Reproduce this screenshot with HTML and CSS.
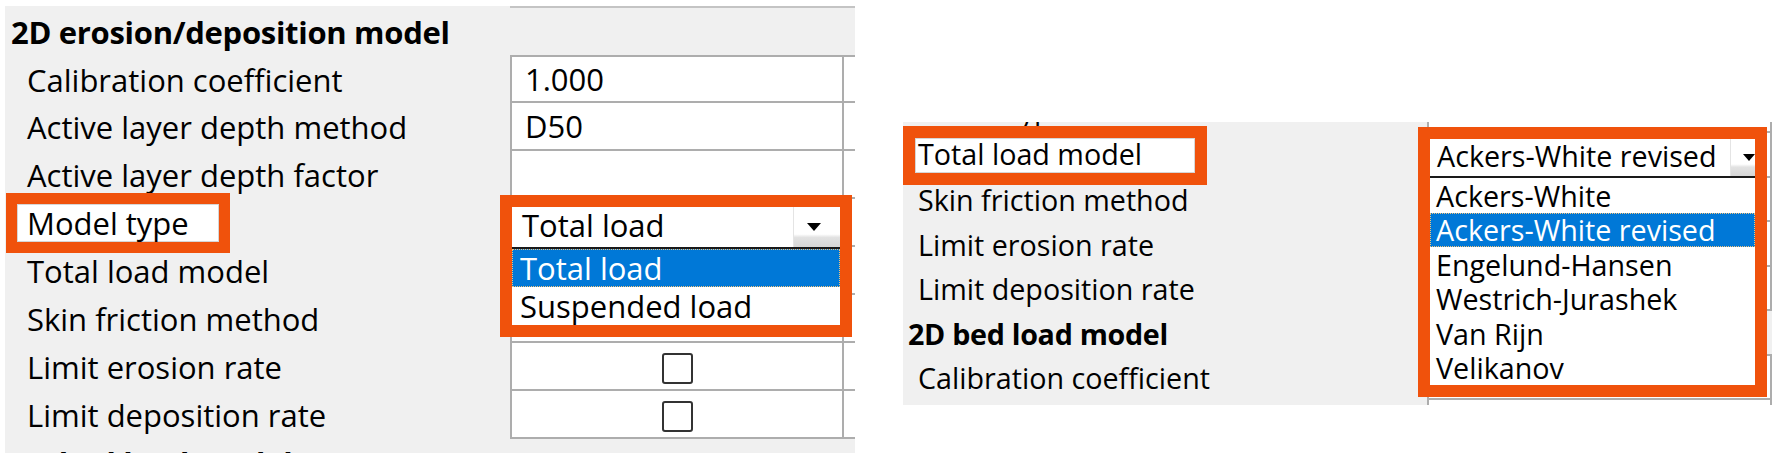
FILE: index.html
```html
<!DOCTYPE html>
<html lang="en">

<head>
  <meta charset="UTF-8">
  <title>property grid</title>
  <link rel="stylesheet" href="styles.css">
</head>

<body>
  <div class="shot">

    <!-- 左边: Model type 下拉 -->
    <div class="grid grid-a">
      <div class="row cat first">
        <div class="name">2D erosion/deposition model</div>
        <div class="val"></div>
        <div class="end"></div>
      </div>
      <div class="row short">
        <div class="name">Calibration coefficient</div>
        <div class="val">1.000</div>
        <div class="end"></div>
      </div>
      <div class="row">
        <div class="name">Active layer depth method</div>
        <div class="val">D50</div>
        <div class="end"></div>
      </div>
      <div class="row">
        <div class="name">Active layer depth factor</div>
        <div class="val"></div>
        <div class="end"></div>
      </div>
      <div class="row">
        <div class="name"><span class="pick">Model type</span></div>
        <div class="val edit">
          <div class="drop">
            <div class="field">
              <span class="text">Total load</span>
              <span class="btn"><svg class="arrow" viewBox="0 0 14 8"><path d="M0 0h14L7 8z"/></svg></span>
            </div>
            <ul class="list">
              <li class="item on">Total load</li>
              <li class="item">Suspended load</li>
            </ul>
          </div>
        </div>
        <div class="end"></div>
      </div>
      <div class="row">
        <div class="name">Total load model</div>
        <div class="val"></div>
        <div class="end"></div>
      </div>
      <div class="row">
        <div class="name">Skin friction method</div>
        <div class="val"></div>
        <div class="end"></div>
      </div>
      <div class="row">
        <div class="name">Limit erosion rate</div>
        <div class="val box"><span class="check"></span></div>
        <div class="end"></div>
      </div>
      <div class="row">
        <div class="name">Limit deposition rate</div>
        <div class="val box"><span class="check"></span></div>
        <div class="end"></div>
      </div>
      <div class="row cat">
        <div class="name">2D bed load model</div>
        <div class="val"></div>
        <div class="end"></div>
      </div>
    </div>

    <!-- 右边: Total load model 下拉 -->
    <div class="grid grid-b">
      <div class="row clip">
        <div class="name">Model type</div>
        <div class="val"></div>
      </div>
      <div class="row">
        <div class="name"><span class="pick">Total load model</span></div>
        <div class="val edit">
          <div class="drop">
            <div class="field">
              <span class="text">Ackers-White revised</span>
              <span class="btn"><svg class="arrow" viewBox="0 0 14 8"><path d="M0 0h14L7 8z"/></svg></span>
            </div>
            <ul class="list">
              <li class="item">Ackers-White</li>
              <li class="item on">Ackers-White revised</li>
              <li class="item">Engelund-Hansen</li>
              <li class="item">Westrich-Jurashek</li>
              <li class="item">Van Rijn</li>
              <li class="item">Velikanov</li>
            </ul>
          </div>
        </div>
      </div>
      <div class="row">
        <div class="name">Skin friction method</div>
        <div class="val"></div>
      </div>
      <div class="row">
        <div class="name">Limit erosion rate</div>
        <div class="val box"><span class="check"></span></div>
      </div>
      <div class="row">
        <div class="name">Limit deposition rate</div>
        <div class="val box"><span class="check"></span></div>
      </div>
      <div class="row cat">
        <div class="name">2D bed load model</div>
        <div class="val"></div>
      </div>
      <div class="row">
        <div class="name">Calibration coefficient</div>
        <div class="val"></div>
      </div>
      <div class="row">
        <div class="name"></div>
        <div class="val"></div>
      </div>
    </div>

  </div>
</body>

</html>
```

FILE: styles.css
```css
body {
  margin: 0;
  background: #fff;
  color: #000;
  font-family: "Open Sans", "Noto Sans", sans-serif;
  font-weight: 500;
}

.shot {
  display: flex;
  align-items: flex-start;
  height: 453px;
  overflow: hidden;
}

/* 属性表 */
.grid {
  background: #f0f0f0;
  overflow: hidden;
}

.grid-a {
  width: 850px;
  height: 447px;
  margin: 6px 0 0 5px;
  font-size: 31px;
}

.grid-b {
  width: 869px;
  height: 283px;
  margin: 122px 0 0 48px;
  font-size: 28.7px;
}

.row {
  display: grid;
}

.grid-a .row {
  grid-template-columns: 505px 332px 13px;
  height: 48px;
}

.grid-a .row.first {
  height: 51px;
}

.grid-a .row.short {
  height: 46px;
}

.grid-b .row {
  grid-template-columns: 524px 345px;
  height: 44.5px;
}

.grid-b .row.clip {
  margin-top: -33.5px;
}

.name {
  display: flex;
  align-items: center;
  white-space: nowrap;
}

.grid-a .name {
  padding-left: 22px;
}

.grid-b .name {
  padding-left: 15px;
}

.cat .name {
  font-weight: 700;
  letter-spacing: -0.3px;
}

.grid-a .cat .name {
  padding-left: 6px;
}

.grid-b .cat .name {
  padding-left: 5px;
}

.val,
.end {
  box-sizing: border-box;
  display: flex;
  align-items: center;
  background: #fff;
  border-left: 2px solid #adadad;
  border-bottom: 2px solid #adadad;
}

.grid-a .val {
  padding-left: 13px;
}

.grid-b .val {
  border-right: 2px solid #adadad;
}

.cat .val,
.cat .end {
  background: transparent;
  border-left: 0;
  border-right: 0;
}

.first .val,
.first .end {
  border-top: 2px solid #c4c4c4;
}

/* 复选框 */
.val.box {
  justify-content: center;
  padding-left: 0;
}

.check {
  box-sizing: border-box;
  width: 31px;
  height: 31px;
  margin-top: 4px;
  border: 2px solid #333;
  border-radius: 3px;
  background: #fff;
}

.grid-b .check {
  width: 28px;
  height: 28px;
}

/* 选中的名称 + 橙色标记框 */
.pick {
  box-sizing: border-box;
  display: flex;
  align-items: center;
  background: #fff;
  border: 1px solid #d6d6d6;
  outline: 11px solid #f0520c;
}

.grid-a .pick {
  height: 38px;
  margin-left: -10px;
  padding: 0 29px 0 9px;
}

.grid-b .pick {
  height: 35px;
  margin-left: -3px;
  padding: 0 52px 3px 2px;
  outline-width: 12px;
}

/* 下拉框 */
.val.edit {
  position: relative;
}

.drop {
  position: absolute;
  z-index: 3;
  background: #fff;
  outline: 12px solid #f0520c;
}

.grid-a .drop {
  top: 8px;
  left: 0;
  width: 328px;
}

.grid-b .drop {
  top: 6px;
  left: 1px;
  width: 325px;
}

.field {
  display: flex;
  align-items: center;
}

.field .text {
  padding-bottom: 4px;
}

.grid-a .field {
  height: 40px;
  padding-left: 10px;
}

.grid-b .field {
  height: 37px;
  padding-left: 7px;
}

.btn {
  box-sizing: border-box;
  display: flex;
  align-items: center;
  justify-content: center;
  height: 100%;
  margin-left: auto;
  border-left: 1px solid #e4e4e4;
  background: linear-gradient(#fff 0, #fff 68%, #e2e2e2 76%, #d6d6d6 100%);
}

.grid-a .btn {
  width: 47px;
  padding-right: 7px;
}

.grid-b .btn {
  width: 25px;
  padding-left: 11px;
}

.arrow {
  width: 14px;
  height: 8px;
  fill: #000;
}

.grid-b .arrow {
  width: 12px;
  height: 7px;
}

.list {
  margin: 0;
  padding: 0;
  list-style: none;
  border-top: 2px solid #1a1a1a;
}

.item {
  display: flex;
  align-items: center;
  white-space: nowrap;
}

.grid-a .item {
  height: 38px;
  padding-left: 8px;
}

.grid-b .item {
  height: 34.5px;
  padding-left: 6px;
}

.item.on {
  background: #0078d7;
  color: #fff;
  outline: 1px dotted #f2c27c;
  outline-offset: -1px;
}
```
